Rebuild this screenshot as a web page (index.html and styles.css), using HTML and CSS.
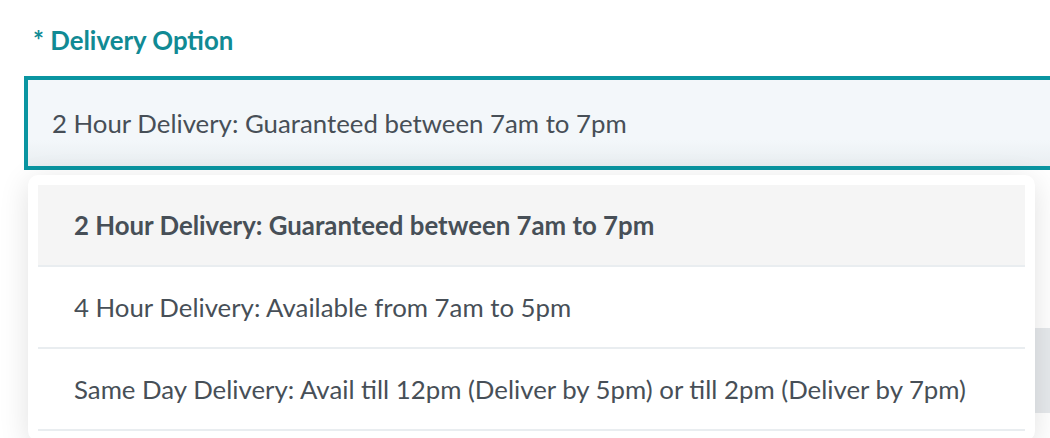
FILE: index.html
```html
<!DOCTYPE html>
<html lang="en">
<head>
<meta charset="utf-8">
<title>Delivery Option</title>
<link rel="stylesheet" href="styles.css">
</head>
<body>
<div class="field">
  <label class="label">* Delivery Option</label>
  <div class="select">2 Hour Delivery: Guaranteed between 7am to 7pm</div>
  <div class="below">
    <div class="behind-block"></div>
    <ul class="menu">
      <li class="option active">2 Hour Delivery: Guaranteed between 7am to 7pm</li>
      <li class="option">4 Hour Delivery: Available from 7am to 5pm</li>
      <li class="option">Same Day Delivery: Avail till 12pm (Deliver by 5pm) or till 2pm (Deliver by 7pm)</li>
    </ul>
  </div>
</div>
</body>
</html>
```
FILE: styles.css
```css
html, body {
  margin: 0;
  padding: 0;
  background: #ffffff;
  overflow: hidden;
  height: 438px;
}
body {
  font-family: Lato, "Open Sans", sans-serif;
  color: #474f57;
}
.field {
  padding: 25px 0 0 24px;
  width: 1100px;
}
.label {
  display: block;
  padding-left: 9px;
  font-size: 25.8px;
  font-weight: 700;
  color: #118a94;
  line-height: 30px;
  margin-bottom: 21px;
}
.select {
  box-sizing: border-box;
  height: 94px;
  border: 4px solid #0a95a1;
  background: linear-gradient(to bottom, #f3f7fa 0%, #f3f7fa 70%, #e9eef1 100%);
  padding: 0 24px;
  display: flex;
  align-items: center;
  font-size: 25.8px;
  color: #474f57;
}
.below {
  position: relative;
  height: 260px;
}
.behind-block {
  position: absolute;
  left: 960px;
  top: 158px;
  width: 200px;
  height: 85px;
  background: #e6e9ec;
}
.menu {
  position: absolute;
  left: 4px;
  top: 5px;
  width: 987px;
  margin: 0;
  padding: 10px 10px;
  list-style: none;
  background: #ffffff;
  border-radius: 10px;
  box-shadow: 0 6px 30px rgba(0, 0, 0, 0.12);
}
.option {
  height: 80px;
  display: flex;
  align-items: center;
  padding-left: 36px;
  font-size: 25.8px;
  border-bottom: 2px solid #e9edf0;
}
.option.active {
  background: #f5f5f5;
  font-weight: 700;
}
```
